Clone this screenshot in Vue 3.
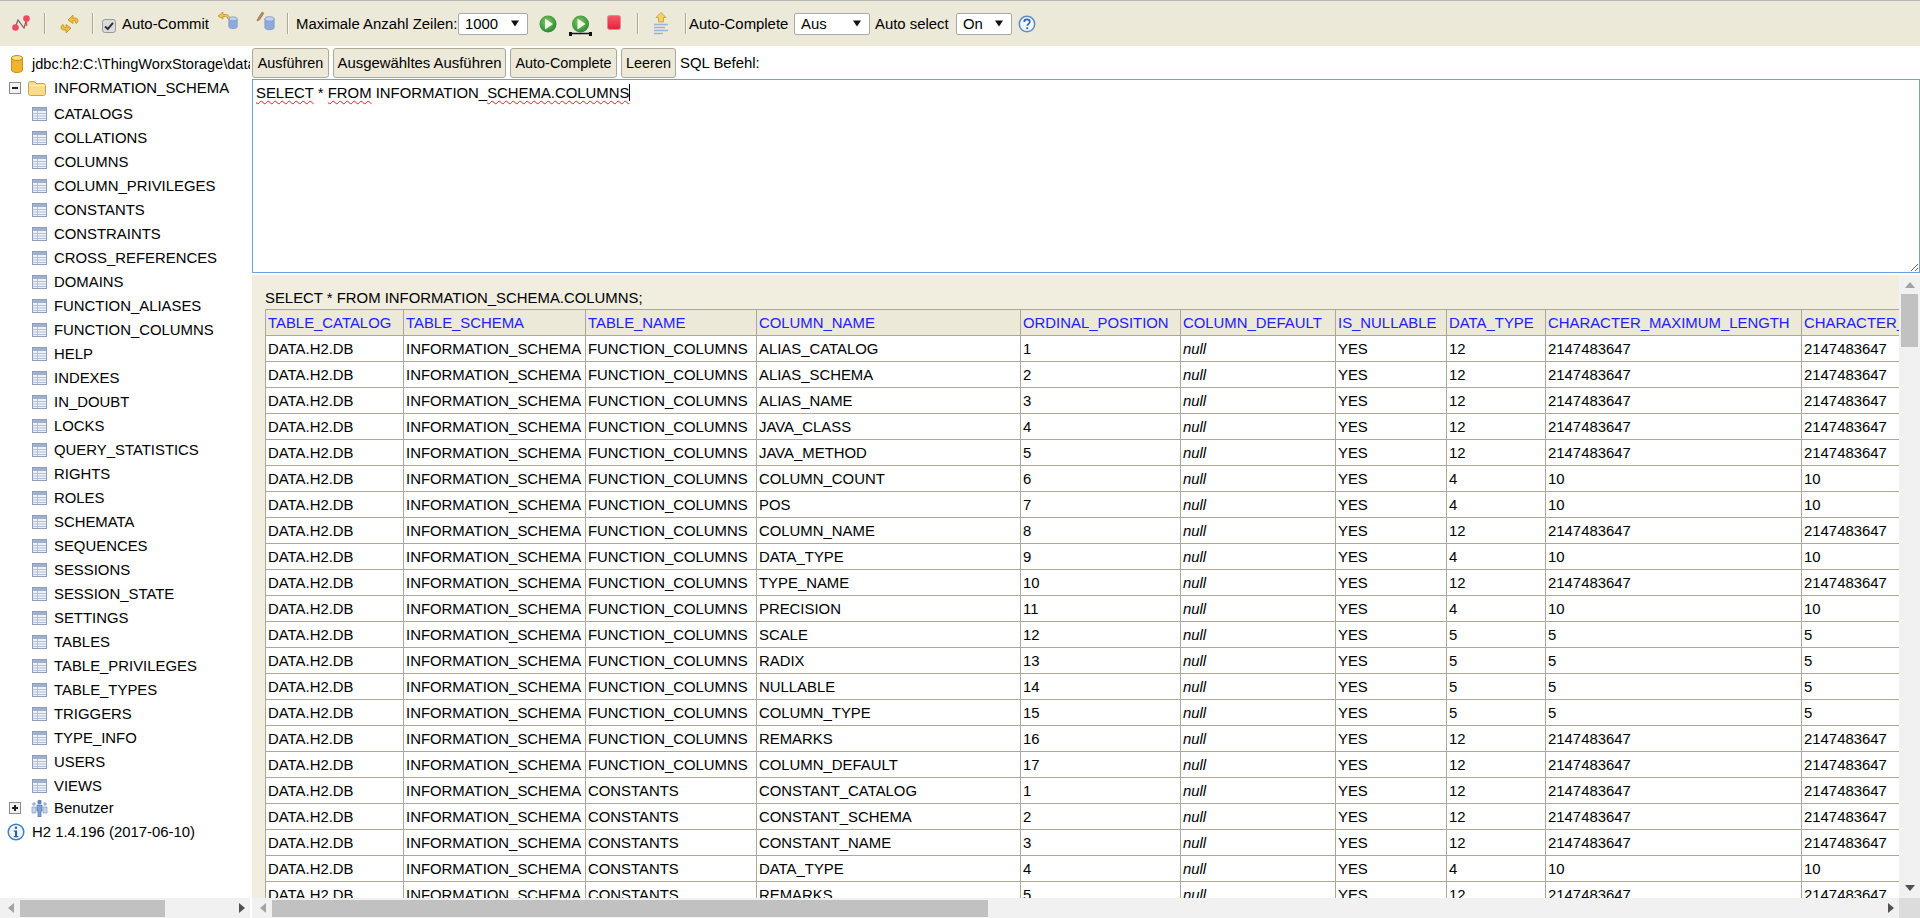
<script setup>
const tables = ['CATALOGS','COLLATIONS','COLUMNS','COLUMN_PRIVILEGES','CONSTANTS','CONSTRAINTS','CROSS_REFERENCES','DOMAINS','FUNCTION_ALIASES','FUNCTION_COLUMNS','HELP','INDEXES','IN_DOUBT','LOCKS','QUERY_STATISTICS','RIGHTS','ROLES','SCHEMATA','SEQUENCES','SESSIONS','SESSION_STATE','SETTINGS','TABLES','TABLE_PRIVILEGES','TABLE_TYPES','TRIGGERS','TYPE_INFO','USERS','VIEWS']
const cols = [
  ['TABLE_CATALOG',138],['TABLE_SCHEMA',182],['TABLE_NAME',171],['COLUMN_NAME',264],['ORDINAL_POSITION',160],
  ['COLUMN_DEFAULT',155],['IS_NULLABLE',111],['DATA_TYPE',99],['CHARACTER_MAXIMUM_LENGTH',256],['CHARACTER_OCTET_LENGTH',260]
]
const raw = [
  ['FUNCTION_COLUMNS','ALIAS_CATALOG',12],['FUNCTION_COLUMNS','ALIAS_SCHEMA',12],['FUNCTION_COLUMNS','ALIAS_NAME',12],
  ['FUNCTION_COLUMNS','JAVA_CLASS',12],['FUNCTION_COLUMNS','JAVA_METHOD',12],['FUNCTION_COLUMNS','COLUMN_COUNT',4],
  ['FUNCTION_COLUMNS','POS',4],['FUNCTION_COLUMNS','COLUMN_NAME',12],['FUNCTION_COLUMNS','DATA_TYPE',4],
  ['FUNCTION_COLUMNS','TYPE_NAME',12],['FUNCTION_COLUMNS','PRECISION',4],['FUNCTION_COLUMNS','SCALE',5],
  ['FUNCTION_COLUMNS','RADIX',5],['FUNCTION_COLUMNS','NULLABLE',5],['FUNCTION_COLUMNS','COLUMN_TYPE',5],
  ['FUNCTION_COLUMNS','REMARKS',12],['FUNCTION_COLUMNS','COLUMN_DEFAULT',12],
  ['CONSTANTS','CONSTANT_CATALOG',12],['CONSTANTS','CONSTANT_SCHEMA',12],['CONSTANTS','CONSTANT_NAME',12],
  ['CONSTANTS','DATA_TYPE',4],['CONSTANTS','REMARKS',12]
]
const ordinals = raw.map((r, i) => (i < 17 ? i + 1 : i - 16))
const sizeOf = t => (t === 12 ? '2147483647' : t === 4 ? '10' : '5')
const rows = raw.map((r, i) => ({ table: r[0], column: r[1], ord: ordinals[i], type: r[2], size: sizeOf(r[2]) }))
const tableWidth = cols.reduce((s, c) => s + c[1], 0)
</script>

<template>
  <div class="app">
    <svg class="defs" width="0" height="0">
      <defs>
        <radialGradient id="go" cx="45%" cy="40%" r="65%">
          <stop offset="0%" stop-color="#8fcb6a"/>
          <stop offset="70%" stop-color="#3f9a3f"/>
          <stop offset="100%" stop-color="#2a7a35"/>
        </radialGradient>
        <linearGradient id="stopg" x1="0" y1="0" x2="0" y2="1">
          <stop offset="0%" stop-color="#f25a68"/>
          <stop offset="100%" stop-color="#e8203a"/>
        </linearGradient>
        <symbol id="tbl" viewBox="0 0 15 14">
          <rect x="0.5" y="0.5" width="14" height="13" fill="#eef1f7" stroke="#8d9dbb"/>
          <rect x="1" y="1" width="13" height="3" fill="#9fb1cf"/>
          <path d="M1 6.5h13M1 9h13M1 11.5h13M5.5 4v9" stroke="#b3c0d6" fill="none"/>
        </symbol>
        <symbol id="cyl" viewBox="0 0 12 16">
          <path d="M1 3v9.5c0 3 10 3 10 0V3z" fill="#8fa9dc" stroke="#7f9bcb"/>
          <ellipse cx="6" cy="3" rx="5" ry="2.4" fill="#c3d3ee" stroke="#7f9bcb"/>
        </symbol>
      </defs>
    </svg>

    <header class="toolbar">
      <svg class="ic ic-disc" width="18" height="17" viewBox="0 0 18 17">
        <path d="M3 13 6 5l6 8 3-10" fill="none" stroke="#7d5a6a" stroke-width="1.2"/>
        <circle cx="3.5" cy="12.5" r="3.300" fill="#ee4a62"/>
        <circle cx="14.5" cy="3.500" r="3.300" fill="#ee4a62"/>
        <path d="M14.5 6v5" stroke="#ee4a62" stroke-width="1.4"/>
      </svg>
      <i class="sep s1"></i>
      <svg class="ic ic-ref" width="19" height="20" viewBox="0 0 19 20">
        <path d="M8 6 13 1v3h2.500c1.500 0 2.500 1 2.500 2.500 0 1-.5 2-1.500 3l-1.500-1c.3-1 0-2-1-2H13v3z" fill="#eebc3a" stroke="#b98a1f" stroke-width=".7"/>
        <path d="M11 14 6 19v-3H3.500C2 16 1 15 1 13.500c0-1 .5-2 1.500-3l1.500 1c-.3 1 0 2 1 2H6v-3z" fill="#eebc3a" stroke="#b98a1f" stroke-width=".7"/>
      </svg>
      <i class="sep s2"></i>
      <svg class="ic ic-check" width="14" height="14" viewBox="0 0 14 14">
        <rect x=".5" y=".5" width="13" height="13" rx="2.500" fill="#dcdcdc" stroke="#9a9a9a"/>
        <path d="M3 7.500 5.800 10 11 3.800" fill="none" stroke="#333" stroke-width="2"/>
      </svg>
      <span class="lbl l-commit">Auto-Commit</span>
      <svg class="ic ic-commit" width="21" height="19" viewBox="0 0 21 19">
        <path d="M1 4 6 0v2.500h3c2 0 3.500 1.500 3.500 4v1.500l-2-1.500c0-1.500-.8-2-2-2H6V7z" fill="#edc45a" stroke="#b98a1f" stroke-width=".7"/>
        <use href="#cyl" x="11" y="4" width="10" height="14"/>
      </svg>
      <svg class="ic ic-roll" width="19" height="20" viewBox="0 0 19 20">
        <path d="M1.500 8 6 1l2 1.200L3.500 9 1 10z" fill="#b98a55" stroke="#8a6a42" stroke-width=".5"/>
        <use href="#cyl" x="8" y="5" width="11" height="15"/>
      </svg>
      <i class="sep s3"></i>
      <span class="lbl l-max">Maximale Anzahl Zeilen:</span>
      <div class="sel sel-max"><span>1000</span><svg width="8" height="7" viewBox="0 0 9 7"><path d="M0 0h9L4.500 7z" fill="#111"/></svg></div>
      <svg class="ic ic-run" width="18" height="18" viewBox="0 0 18 18">
        <circle cx="9" cy="9" r="8.500" fill="url(#go)"/>
        <path d="M6 3.500 14 9l-8 5.500z" fill="#eef7e4"/>
      </svg>
      <svg class="ic ic-runsel" width="23" height="21" viewBox="0 0 23 21">
        <circle cx="11.500" cy="9" r="8.500" fill="url(#go)"/>
        <path d="M8.500 3.500 16.500 9l-8 5.500z" fill="#eef7e4"/>
        <path d="M1.500 18.500h20" stroke="#111" stroke-width="1.500"/>
        <rect x="0" y="17" width="3" height="4" fill="#111"/>
        <rect x="20" y="17" width="3" height="4" fill="#111"/>
      </svg>
      <svg class="ic ic-stop" width="14" height="15" viewBox="0 0 14 15">
        <rect x=".5" y=".5" width="13" height="14" rx="2" fill="url(#stopg)" stroke="#e78a90"/>
      </svg>
      <i class="sep s4"></i>
      <svg class="ic ic-hist" width="16" height="23" viewBox="0 0 16 23">
        <path d="M8 .5 13 5.500H10.500V10h-5V5.500H3z" fill="#f3d267" stroke="#c59a33" stroke-width=".8"/>
        <path d="M1 12.500h14M1 15.500h11M1 18.500h14M1 21.500h9" stroke="#9db3d6" stroke-width="1.500"/>
      </svg>
      <i class="sep s5"></i>
      <span class="lbl l-ac">Auto-Complete</span>
      <div class="sel sel-ac"><span>Aus</span><svg width="8" height="7" viewBox="0 0 9 7"><path d="M0 0h9L4.500 7z" fill="#111"/></svg></div>
      <span class="lbl l-as">Auto select</span>
      <div class="sel sel-as"><span>On</span><svg width="8" height="7" viewBox="0 0 9 7"><path d="M0 0h9L4.500 7z" fill="#111"/></svg></div>
      <svg class="ic ic-help" width="18" height="18" viewBox="0 0 18 18">
        <circle cx="9" cy="9" r="7.700" fill="#f4f7fc" stroke="#5c8cc9" stroke-width="1.600"/>
        <path d="M6.200 7c0-1.800 1.200-2.600 2.800-2.600s2.800.9 2.800 2.400c0 2-2.500 2-2.500 4" fill="none" stroke="#2d66ad" stroke-width="1.700"/>
        <rect x="8.300" y="12.300" width="1.900" height="1.900" fill="#2d66ad"/>
      </svg>
    </header>

    <main class="main">
      <aside class="side">
        <div class="tree">
          <div class="conn">
            <svg class="db" width="12" height="18" viewBox="0 0 12 18">
              <path d="M.5 3v12c0 3.300 11 3.300 11 0V3z" fill="#efb52f" stroke="#c98f1c"/>
              <ellipse cx="6" cy="3" rx="5.500" ry="2.500" fill="#f9dd7c" stroke="#c98f1c"/>
            </svg>
            <span>jdbc:h2:C:\ThingWorxStorage\database</span>
          </div>
          <div class="schema">
            <span class="exp"><b class="h"></b></span>
            <svg class="folder" width="18" height="16" viewBox="0 0 18 16">
              <path d="M.5 3.500C.5 2 1.500 1.500 2.500 1.500h4l1.500 2h7.500c1.200 0 2 .8 2 2v8c0 1.200-.8 2-2 2h-13c-1.200 0-2-.8-2-2z" fill="#f7dc8c" stroke="#c9a24a"/>
              <path d="M1 5.500h16" stroke="#fdf1c4"/>
            </svg>
            <span>INFORMATION_SCHEMA</span>
          </div>
          <div v-for="t in tables" :key="t" class="titem">
            <svg class="ticon" width="15" height="14"><use href="#tbl"/></svg>
            <span>{{ t }}</span>
          </div>
          <div class="users">
            <span class="exp"><b class="h"></b><b class="v"></b></span>
            <svg class="uicon" width="17" height="18" viewBox="0 0 17 18">
              <circle cx="3" cy="5" r="1.800" fill="#9db3d6"/><circle cx="14" cy="5" r="1.800" fill="#9db3d6"/>
              <path d="M1 8h4v6H1zM12 8h4v6h-4z" fill="#c6d4ea" stroke="#7f9bcb" stroke-width=".7"/>
              <circle cx="8.500" cy="3" r="2.200" fill="#5f86bd"/>
              <path d="M6 6h5v6h-1v6H7v-6H6z" fill="#7fa2d4" stroke="#49709f" stroke-width=".7"/>
            </svg>
            <span>Benutzer</span>
          </div>
          <div class="ver">
            <svg width="18" height="18" viewBox="0 0 18 18">
              <circle cx="9" cy="9" r="7.800" fill="#f2f6fc" stroke="#3f7fbf" stroke-width="1.500"/>
              <rect x="7.900" y="3.600" width="2.200" height="2.200" fill="#1f62a8"/>
              <path d="M6.800 7.500h3.300v5.500h1.200v1.200H6.800V13H8V8.700H6.800z" fill="#1f62a8"/>
            </svg>
            <span>H2 1.4.196 (2017-06-10)</span>
          </div>
        </div>
        <div class="hbar side-bar">
          <span class="arr al"></span>
          <div class="track"><div class="thumb side-thumb"></div></div>
          <span class="arr ar dark"></span>
        </div>
      </aside>

      <section class="work">
        <div class="btns">
          <button class="btn b1">Ausführen</button>
          <button class="btn b2">Ausgewähltes Ausführen</button>
          <button class="btn b3">Auto-Complete</button>
          <button class="btn b4">Leeren</button>
          <span class="sqlb">SQL Befehl:</span>
        </div>
        <div class="sql">
          <span class="sq">SELECT</span> * <span class="sq">FROM</span> INFORMATION_<span class="sq">SCHEMA.COLUMNS</span><i class="caret"></i>
        </div>
        <div class="res">
          <div class="res-top">
            <div class="res-body">
              <div class="stmt">SELECT * FROM INFORMATION_SCHEMA.COLUMNS;</div>
              <table class="grid" :style="{ width: tableWidth + 'px' }">
                <colgroup><col v-for="c in cols" :key="c[0]" :style="{ width: c[1] + 'px' }"></colgroup>
                <thead><tr><th v-for="c in cols" :key="c[0]">{{ c[0] }}</th></tr></thead>
                <tbody>
                  <tr v-for="(r, i) in rows" :key="i">
                    <td>DATA.H2.DB</td>
                    <td>INFORMATION_SCHEMA</td>
                    <td>{{ r.table }}</td>
                    <td>{{ r.column }}</td>
                    <td>{{ r.ord }}</td>
                    <td><em>null</em></td>
                    <td>YES</td>
                    <td>{{ r.type }}</td>
                    <td>{{ r.size }}</td>
                    <td>{{ r.size }}</td>
                  </tr>
                </tbody>
              </table>
            </div>
            <div class="vbar">
              <span class="arr au"></span>
              <div class="vtrack"><div class="vthumb"></div></div>
              <span class="arr ad dark"></span>
            </div>
          </div>
          <div class="res-bottom">
            <div class="hbar main-bar">
              <span class="arr al"></span>
              <div class="track"><div class="thumb main-thumb"></div></div>
              <span class="arr ar dark"></span>
            </div>
            <div class="corner"></div>
          </div>
        </div>
      </section>
    </main>
  </div>
</template>

<style>
html, body { margin: 0; padding: 0; overflow: hidden; }
</style>

<style scoped>
.app {
  width: 1920px; height: 918px; display: flex; flex-direction: column; overflow: hidden;
  font-family: "Liberation Sans", Arial, sans-serif; font-size: 14.9px; color: #000; background: #fff;
}
.defs { position: absolute; }
.toolbar {
  flex: none; box-sizing: border-box; height: 46px; border-top: 1px solid #b8b8b8; background: #ece9d8;
  display: flex; align-items: center; white-space: nowrap;
}
.ic { flex: none; display: block; }
.sep { flex: none; width: 1px; height: 21px; background: #aca899; border-right: 1px solid #f8f7f0; }
.ic-disc { margin-left: 12px; }
.s1 { margin-left: 14px; }
.ic-ref { margin-left: 14px; }
.s2 { margin-left: 13px; }
.ic-check { margin-left: 8px; margin-top: 4px; }
.l-commit { margin-left: 6px; flex: none; width: 86px; }
.ic-commit { margin-left: 9px; margin-top: -5px; }
.ic-roll { margin-left: 18px; margin-top: -5px; }
.s3 { margin-left: 12px; }
.l-max { margin-left: 7px; flex: none; width: 159px; }
.sel {
  flex: none; box-sizing: border-box; height: 22px; background: #fff; border: 1px solid #a9a9a9; border-radius: 2px;
  display: flex; align-items: center; justify-content: space-between; padding: 0 8px 0 6px;
}
.sel-max { width: 70px; margin-left: 3px; }
.ic-run { margin-left: 11px; }
.ic-runsel { margin-left: 12px; margin-top: 3px; }
.ic-stop { margin-left: 15px; margin-top: -2px; }
.s4 { margin-left: 16px; }
.ic-hist { margin-left: 14px; margin-top: -1px; }
.s5 { margin-left: 16px; }
.l-ac { margin-left: 2px; flex: none; width: 97px; }
.sel-ac { width: 76px; margin-left: 8px; }
.l-as { margin-left: 5px; flex: none; width: 73px; }
.sel-as { width: 56px; margin-left: 8px; }
.ic-help { margin-left: 6px; }

.main { flex: 1; min-height: 0; display: flex; }
.side { flex: none; width: 250px; display: flex; flex-direction: column; margin-right: 2px; }
.tree { flex: 1; min-height: 0; overflow: hidden; white-space: nowrap; }
.conn { height: 24px; margin-top: 6px; display: flex; align-items: center; font-size: 14.6px; }
.db { flex: none; margin-left: 11px; margin-right: 9px; }
.conn span { flex: none; }
.schema { height: 24px; display: flex; align-items: center; margin-bottom: 2px; }
.exp {
  flex: none; position: relative; box-sizing: border-box; width: 12px; height: 12px; margin-left: 9px;
  border: 1px solid #8a8a8a; background: #f3f3f3;
}
.exp .h { position: absolute; left: 2px; right: 2px; top: 4px; height: 2px; background: #222; }
.exp .v { position: absolute; top: 2px; bottom: 2px; left: 4px; width: 2px; background: #222; }
.folder { flex: none; margin-left: 7px; margin-right: 8px; }
.titem { height: 24px; display: flex; align-items: center; padding-left: 32px; }
.ticon { flex: none; margin-right: 7px; }
.users { height: 24px; display: flex; align-items: center; margin-top: -2px; }
.uicon { flex: none; margin-left: 10px; margin-right: 6px; }
.ver { height: 24px; display: flex; align-items: center; padding-left: 7px; }
.ver svg { flex: none; margin-right: 7px; }

.hbar { flex: none; height: 20px; background: #f1f1f1; display: flex; align-items: center; box-sizing: border-box; }
.track { flex: 1; height: 17px; position: relative; }
.thumb { position: absolute; top: 0; bottom: 0; background: #c1c1c1; }
.side-thumb { left: 0; width: 145px; }
.main-thumb { left: 0; width: 716px; }
.arr { flex: none; display: block; width: 0; height: 0; border-style: solid; border-color: transparent; }
.al { margin: 0 6px 0 8px; border-width: 5px 6px 5px 0; border-right-color: #a3a3a3; }
.ar { margin: 0 5px 0 6px; border-width: 5px 0 5px 6px; border-left-color: #a3a3a3; }
.ar.dark { border-left-color: #505050; }
.au { margin: 7px auto 6px; border-width: 0 5px 6px 5px; border-bottom-color: #a3a3a3; }
.ad { margin: 6px auto 7px; border-width: 6px 5px 0 5px; border-top-color: #505050; }

.work { flex: 1; min-width: 0; display: flex; flex-direction: column; }
.btns { flex: none; height: 33px; box-sizing: border-box; padding-top: 2px; display: flex; gap: 4px; align-items: flex-start; }
.btn {
  flex: none; box-sizing: border-box; height: 30px; padding: 0; margin: 0; background: #ece9d8; color: #000;
  border: 1px solid #aca899; border-radius: 3px; text-align: center;
  font: inherit; white-space: nowrap;
}
.b1 { width: 77px; font-size: 14.4px; }
.b2 { width: 173px; }
.b3 { width: 107px; font-size: 14.4px; }
.b4 { width: 55px; font-size: 14.4px; }
.sqlb { height: 30px; line-height: 30px; }
.sql {
  flex: none; box-sizing: border-box; height: 194px; border: 1px solid #6f9fde; padding: 3px 3px;
  line-height: 20px; overflow: auto; resize: both; white-space: pre; width: 1668px;
}
.sq { text-decoration: underline wavy #e02020 1px; text-underline-offset: 2px; }
.caret { display: inline-block; width: 1px; height: 17px; background: #000; vertical-align: -3px; }
.res { flex: 1; min-height: 0; margin-top: 2px; display: flex; flex-direction: column; }
.res-top { flex: 1; min-height: 0; display: flex; }
.res-body { flex: 1; min-width: 0; overflow: hidden; background: #f1eee0; padding: 14px 0 0 13px; }
.stmt { height: 20px; line-height: 18px; }
.grid { table-layout: fixed; border-collapse: collapse; }
.grid th, .grid td {
  box-sizing: border-box; height: 26px; padding: 0 2px; border: 1px solid #aca899; text-align: left; white-space: nowrap; overflow: hidden;
  font-weight: normal;
}
.grid th { background: #ece9d8; color: #2020ff; }
.grid td { background: #fff; }
.vbar { flex: none; width: 21px; background: #f1f1f1; display: flex; flex-direction: column; }
.vtrack { flex: 1; position: relative; }
.vthumb { position: absolute; left: 2px; right: 2px; top: 0; height: 53px; background: #c1c1c1; }
.res-bottom { flex: none; height: 20px; display: flex; }
.main-bar { flex: 1; min-width: 0; }
.corner { flex: none; width: 21px; background: #dcdcdc; }
</style>
